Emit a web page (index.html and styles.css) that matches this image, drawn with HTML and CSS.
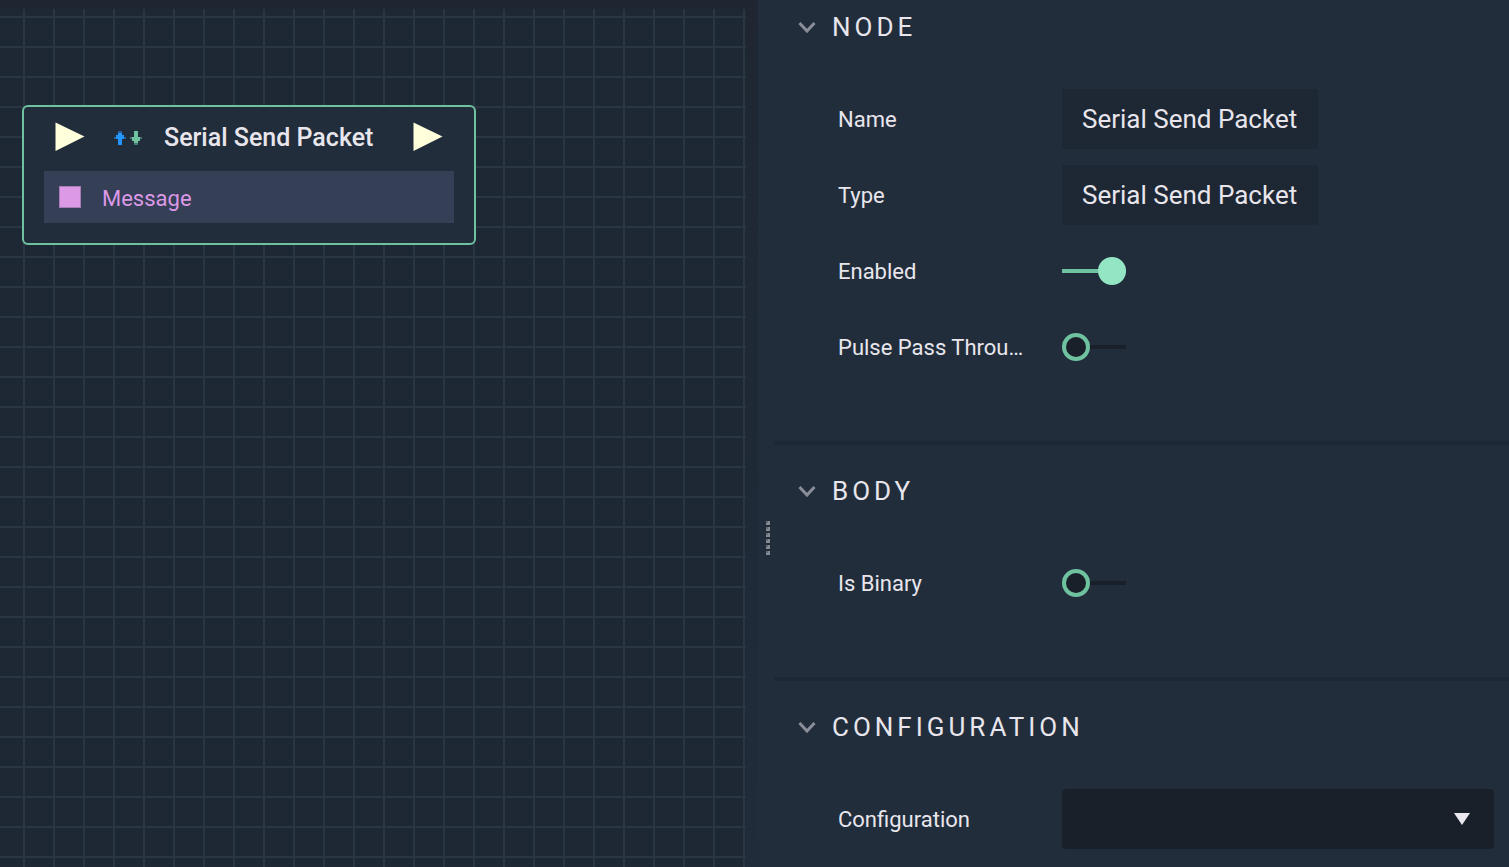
FILE: index.html
```html
<!DOCTYPE html>
<html lang="en">
<head>
<meta charset="utf-8">
<title>Node editor</title>
<link rel="stylesheet" href="styles.css">
</head>
<body>
<div class="editor">
  <main class="graph">
    <div class="canvas">
      <article class="node">
        <header class="node-header">
          <svg class="pulse" viewBox="0 0 30 30" aria-hidden="true"><path d="M0.500 0.500L29.500 14.500L0.500 29Z"/></svg>
          <svg class="arrows" viewBox="0 0 28 14" shape-rendering="crispEdges" aria-hidden="true">
            <path class="up-soft" d="M4 0h4v2H4zM0 6h2v2H0zM10 6h2v2h-2zM2 4h2v2H2zM8 4h2v2H8z"/>
            <path class="up" d="M4 2h4v2h2v4H8v6H4V8H2V4h2z"/>
            <path class="down-soft" d="M20 12h4v2h-4zM16 6h2v2h-2zM26 6h2v2h-2zM18 8h2v2h-2zM24 8h2v2h-2z"/>
            <path class="down" d="M20 0h4v6h2v4h-2v2h-4v-2h-2V6h2z"/>
          </svg>
          <h1 class="node-title">Serial Send Packet</h1>
          <svg class="pulse" viewBox="0 0 30 30" aria-hidden="true"><path d="M0.500 0.500L29.500 14.500L0.500 29Z"/></svg>
        </header>
        <div class="pin"><span class="pin-mark"></span><span>Message</span></div>
      </article>
    </div>
  </main>
  <div class="splitter" role="separator" aria-orientation="vertical">
    <svg class="grip" viewBox="0 0 4 34" shape-rendering="crispEdges" aria-hidden="true">
      <path class="grip-dot" d="M0 0h4v4H0zM0 6h4v4H0zM0 12h4v4H0zM0 18h4v4H0zM0 24h4v4H0zM0 30h4v4H0z"/>
      <path class="grip-shade" d="M0 0h2v2H0zM0 6h2v2H0zM0 12h2v2H0zM0 18h2v2H0zM0 24h2v2H0zM0 30h2v2H0z"/>
    </svg>
  </div>
  <aside class="properties">
    <section class="group">
      <h2 class="group-title"><button class="group-toggle" type="button" aria-expanded="true">
        <svg class="chevron" viewBox="0 0 18 12" aria-hidden="true"><path d="M1.500 2L9 10L16.500 2"/></svg>NODE</button></h2>
      <div class="row"><label class="label" for="name">Name</label><input class="text" id="name" type="text" value="Serial Send Packet"></div>
      <div class="row"><label class="label" for="type">Type</label><input class="text" id="type" type="text" value="Serial Send Packet" readonly></div>
      <div class="row"><label class="label" for="enabled">Enabled</label><input class="switch" id="enabled" type="checkbox" role="switch" checked></div>
      <div class="row"><label class="label" for="pulse">Pulse Pass Throu…</label><input class="switch" id="pulse" type="checkbox" role="switch"></div>
    </section>
    <section class="group">
      <h2 class="group-title"><button class="group-toggle" type="button" aria-expanded="true">
        <svg class="chevron" viewBox="0 0 18 12" aria-hidden="true"><path d="M1.500 2L9 10L16.500 2"/></svg>BODY</button></h2>
      <div class="row"><label class="label" for="binary">Is Binary</label><input class="switch" id="binary" type="checkbox" role="switch"></div>
    </section>
    <section class="group">
      <h2 class="group-title"><button class="group-toggle" type="button" aria-expanded="true">
        <svg class="chevron" viewBox="0 0 18 12" aria-hidden="true"><path d="M1.500 2L9 10L16.500 2"/></svg>CONFIGURATION</button></h2>
      <div class="row"><label class="label" for="configuration">Configuration</label>
        <div class="select-wrap"><select class="select" id="configuration"><option value=""></option></select>
        <svg class="caret" viewBox="0 0 16 12" aria-hidden="true"><path d="M0 0H16L8 12Z"/></svg></div></div>
    </section>
  </aside>
</div>
</body>
</html>
```
FILE: styles.css
```css
* {
  box-sizing: border-box;
}

body {
  margin: 0;
  background: #222d3c;
  color: #e8e6ec;
  font-family: Roboto, "Liberation Sans", sans-serif;
  font-size: 22px;
}

.editor {
  display: flex;
  height: 100vh;
  overflow: hidden;
}

/* Graph */

.graph {
  flex: 1;
  min-width: 0;
  display: flex;
  padding: 9px 12px 0 0;
  background: linear-gradient(#1f2631, #1f2733 90px, #1f2936 50%, #212c3b);
}

.canvas {
  flex: 1;
  padding: 96px 22px 0;
  background-color: #1e2734;
  background-image:
    linear-gradient(90deg, #2a3642 2px, transparent 2px),
    linear-gradient(#2a3642 2px, transparent 2px);
  background-size: 30px 30px;
  background-position: 23px 7px;
}

.node {
  width: 454px;
  padding: 15px 20px 20px;
  border: 2px solid #6fc2a0;
  border-radius: 6px;
  background: #222d3c;
}

.node-header {
  display: flex;
  align-items: center;
  height: 30px;
  margin-bottom: 19px;
  padding: 0 11px;
}

.pulse {
  width: 30px;
  height: 30px;
  fill: #ffffdc;
}

.arrows {
  width: 28px;
  height: 14px;
  margin: 2px 22px 0 29px;
}

.up { fill: #2495ff; }
.up-soft { fill: #235f9b; }
.down { fill: #6fc2a0; }
.down-soft { fill: #47766d; }

.node-title {
  flex: 1;
  margin: 0;
  padding-top: 2px;
  font-size: 25px;
  font-weight: 500;
  line-height: 30px;
  white-space: nowrap;
}

.pin {
  display: flex;
  align-items: center;
  gap: 21px;
  height: 52px;
  padding: 2px 15px 0;
  background: #353f56;
  color: #db99e6;
}

.pin-mark {
  width: 22px;
  height: 22px;
  margin-bottom: 2px;
  border: 1px solid #a77bb5;
  background: #db99e6;
}

/* Splitter */

.splitter {
  display: flex;
  flex-direction: column;
  width: 16px;
  padding: 0 4px 0 8px;
  cursor: col-resize;
}

.splitter::before {
  content: "";
  flex: 0 0 60%;
  margin-bottom: 1px;
}

.grip {
  display: block;
  width: 4px;
  height: 34px;
}

.grip-dot { fill: #858a92; }
.grip-shade { fill: #646c76; }

/* Properties */

.properties {
  width: 735px;
  overflow: hidden;
}

.group {
  padding-bottom: 56px;
  border-bottom: 4px solid #1e2734;
}

.group-title {
  margin: 0;
  padding: 30px 24px 38px;
  font-size: 26px;
  font-weight: 400;
  line-height: 32px;
}

.group:first-child .group-title {
  padding-top: 11px;
}

.group-toggle {
  display: flex;
  align-items: center;
  gap: 16px;
  padding: 0;
  border: 0;
  background: none;
  color: inherit;
  font: inherit;
  letter-spacing: 4px;
}

.chevron {
  width: 18px;
  height: 12px;
  fill: none;
  stroke: #8a8e99;
  stroke-width: 3;
}

.row {
  display: flex;
  align-items: center;
  gap: 36px;
  height: 76px;
  padding: 0 15px 0 64px;
}

.label {
  flex: none;
  width: 188px;
  padding-top: 2px;
  line-height: 28px;
  white-space: nowrap;
}

.text {
  width: 256px;
  height: 60px;
  padding: 0 20px;
  border: 0;
  background: #1e2734;
  color: inherit;
  font: inherit;
  font-size: 26px;
}

.switch {
  appearance: none;
  display: flex;
  align-items: center;
  width: 64px;
  height: 28px;
  margin: 0;
  border-radius: 2px;
  background: linear-gradient(#1a2029, #1a2029) center / 100% 4px no-repeat;
}

.switch::before {
  content: "";
  box-sizing: border-box;
  width: 28px;
  height: 28px;
  border: 4px solid #6fc2a0;
  border-radius: 50%;
  background: #1a2029;
}

.switch:checked {
  justify-content: flex-end;
  background-image: linear-gradient(#6fc2a0, #6fc2a0);
}

.switch:checked::before {
  border-color: #93e5c4;
  background: #93e5c4;
}

.select-wrap {
  flex: 1;
  display: grid;
  align-items: center;
}

.select {
  grid-area: 1 / 1;
  appearance: none;
  width: 100%;
  height: 60px;
  padding: 0 48px 0 20px;
  border: 0;
  border-radius: 4px;
  background: #1a2029;
  color: inherit;
  font: inherit;
}

.caret {
  grid-area: 1 / 1;
  justify-self: end;
  width: 16px;
  height: 12px;
  margin-right: 24px;
  fill: #ebe7ee;
  pointer-events: none;
}
```
